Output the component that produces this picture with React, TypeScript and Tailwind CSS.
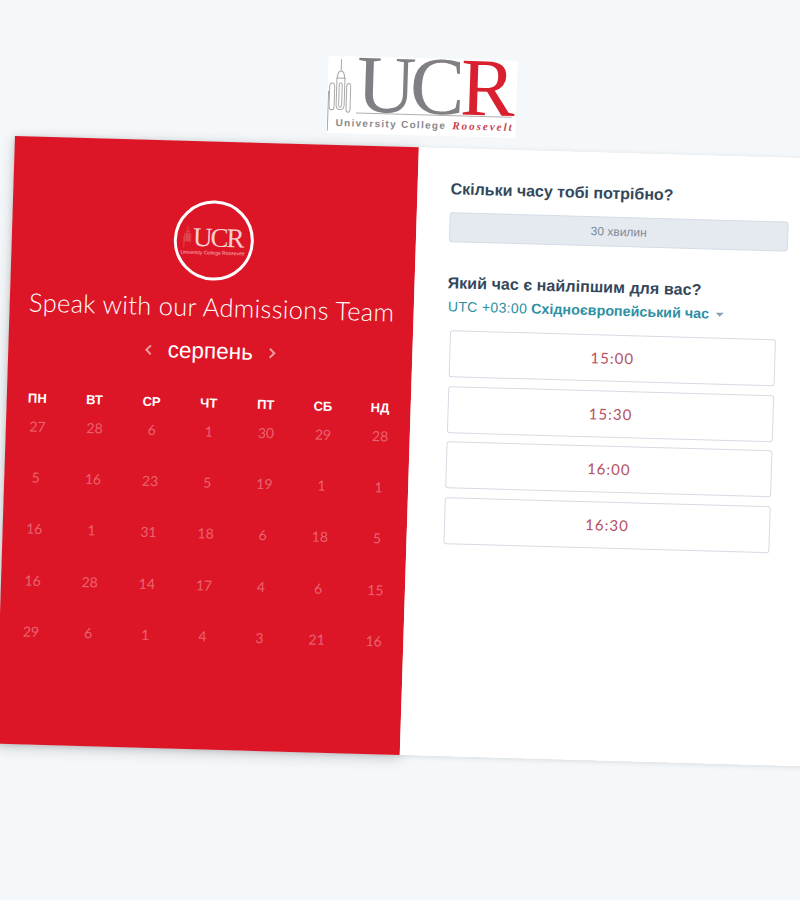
const days = [
  ["27", "28", "6", "1", "30", "29", "28"],
  ["5", "16", "23", "5", "19", "1", "1"],
  ["16", "1", "31", "18", "6", "18", "5"],
  ["16", "28", "14", "17", "4", "6", "15"],
  ["29", "6", "1", "4", "3", "21", "16"],
];
const heads = ["ПН", "ВТ", "СР", "ЧТ", "ПТ", "СБ", "НД"];
const slots = ["15:00", "15:30", "16:00", "16:30"];

function Tower({ stroke }: { stroke: string }) {
  return (
    <svg viewBox="0 0 24 72" className="h-full w-full" fill="none" stroke={stroke} strokeWidth="1">
      <path d="M13 0V12M9.5 19C9.5 15 11 12 13 12C15 12 16.5 15 16.5 19M8 19H18M9 19V46M17 19V46" />
      <path d="M2 28C2 23 7 23 7 28V48C7 52 2 52 2 48ZM19 28C19 23 23 23 23 28V50C23 54 19 54 19 50Z" />
      <path d="M11.5 26V46C11.5 49 14.5 49 14.5 46V26C14.5 23 11.5 23 11.5 26Z" />
      <path d="M1 32V72M9 46C9 52 17 52 17 46" />
    </svg>
  );
}

export default function App() {
  return (
    <div className="h-[900px] w-[800px] overflow-hidden bg-[#f5f8fa] font-['Liberation_Sans',sans-serif]">
      <div className="ml-[15px] flex w-[830px] origin-[0px_136px] rotate-[1.6deg] skew-x-[-0.2deg] flex-col">
        <div className="relative ml-[311px] mt-[47px] flex h-[77px] w-[189px] flex-col bg-white">
          <div className="absolute left-[0px] top-[3px] h-[72px] w-[24px]">
            <Tower stroke="#a8a8a8" />
          </div>
          <div className="ml-[29px] flex h-[56px] items-center font-['Liberation_Serif',serif] text-[82px] leading-[56px] tracking-[-6px]">
            <span className="text-[#808084]">UC</span>
            <span className="ml-[2px] text-[#d9202e]">R</span>
          </div>
          <div className="ml-[29px] mr-[4px] border-t border-[#b0b0b0]" />
          <div className="pl-[9px] pt-[3px] whitespace-nowrap text-[10px] font-bold leading-[13px] tracking-[1.3px] text-[#8a8a8e]">
            University College <span className="ml-[2px] font-['Liberation_Serif',serif] text-[11px] italic tracking-[2px] text-[#c9404c]">Roosevelt</span>
          </div>
        </div>
        <div className="mt-[12px] flex h-[608px] shadow-[0_1px_5px_rgba(60,70,80,0.16)]">
          <div className="flex w-[404px] shrink-0 flex-col items-center bg-[#dc1626] text-white shadow-[0_3px_14px_rgba(40,40,40,0.22)]">
            <div className="mt-[59px] flex h-[80px] w-[80px] items-center justify-center rounded-full border-[3px] border-white">
              <div className="flex -translate-x-[1px] flex-col items-center opacity-90">
                <div className="flex h-[24px] items-center">
                  <div className="mr-[1px] h-[22px] w-[9px]">
                    <Tower stroke="#f3a9ae" />
                  </div>
                  <span className="font-['Liberation_Serif',serif] text-[27px] leading-[24px] tracking-[-2px] text-[#fbe3e4]">UCR</span>
                </div>
                <span className="whitespace-nowrap text-[5px] leading-[6px] text-[#f8c9cc]">University College Roosevelt</span>
              </div>
            </div>
            <div className="mt-[9px] whitespace-nowrap font-['Lato',sans-serif] text-[25.5px] font-light leading-[34px] tracking-[0.3px]">Speak with our Admissions Team</div>
            <div className="mt-[15px] flex h-[26px] items-center gap-[15px]">
              <svg width="8" height="12" viewBox="0 0 8 12" fill="none" stroke="#f09ba2" strokeWidth="2"><path d="M6.5 1.5L2 6L6.5 10.5" /></svg>
              <span className="text-[22.5px] leading-none">серпень</span>
              <svg width="8" height="12" viewBox="0 0 8 12" fill="none" stroke="#f09ba2" strokeWidth="2"><path d="M1.5 1.5L6 6L1.5 10.5" /></svg>
            </div>
            <div className="mt-[31px] grid w-[400px] grid-cols-7 text-center text-[13px] font-bold leading-[16px]">
              {heads.map((h) => (
                <div key={h}>{h}</div>
              ))}
            </div>
            <div className="mt-[11px] grid w-[400px] translate-x-[1px] grid-cols-7 text-center font-['Lato',sans-serif] text-[14px] leading-[18px] text-[#ea6270]">
              {days.flat().map((d, i) => (
                <div key={i} className="h-[51.2px]">{d}</div>
              ))}
            </div>
          </div>
          <div className="flex-1 bg-white pl-[33px] pt-[31px] text-[#33475b]">
            <div className="text-[16px] font-bold leading-[20px]">Скільки часу тобі потрібно?</div>
            <div className="mt-[13px] flex h-[30px] w-[339px] items-center justify-center rounded-[3px] border border-[#d4dce5] bg-[#e5e9f0] text-[12px] text-[#7c8a99]">30 хвилин</div>
            <div className="mt-[31px] text-[16px] font-bold leading-[20px] tracking-[0.07px]">Який час є найліпшим для вас?</div>
            <div className="ml-[1px] mt-[4px] flex items-center text-[14px] leading-[18px] text-[#2d8fa3]">
              <span className="tracking-[0.35px]">UTC +03:00</span>
              <span className="ml-[4px] text-[14.3px] font-bold">Східноєвропейський час</span>
              <span className="ml-[7px] mt-[2px] h-0 w-0 border-x-[4px] border-t-[4px] border-x-transparent border-t-[#8ca0b3]" />
            </div>
            <div className="ml-[4px] mt-[15px] flex w-[326px] flex-col gap-[8.5px]">
              {slots.map((s) => (
                <div key={s} className="flex h-[47px] items-center justify-center rounded-[3px] border border-[#d5dbe3] bg-white font-['Lato',sans-serif] text-[15px] tracking-[1px] text-[#b5505f]">{s}</div>
              ))}
            </div>
          </div>
        </div>
      </div>
    </div>
  );
}
